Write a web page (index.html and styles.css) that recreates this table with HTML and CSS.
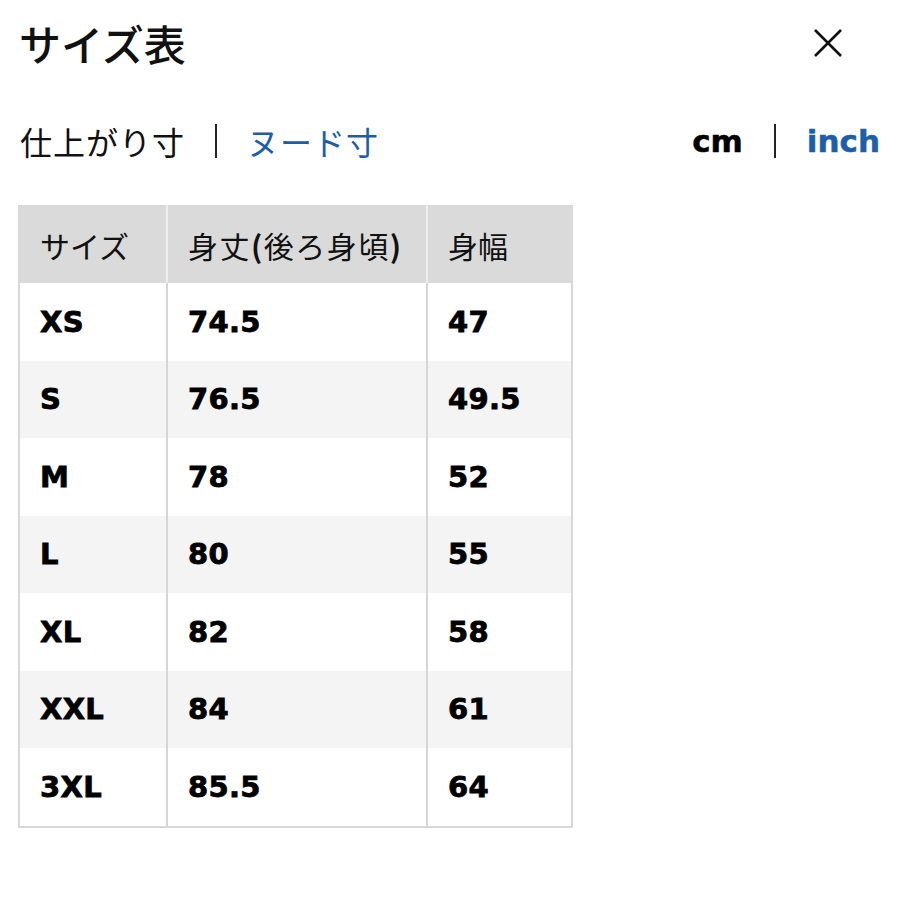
FILE: index.html
```html
<!DOCTYPE html>
<html lang="ja">
<head>
<meta charset="utf-8">
<link rel="stylesheet" href="styles.css">
</head>
<body>
<div class="page">
  <header class="top">
    <h1 class="title">サイズ表</h1>
    <svg class="close" width="30" height="30" viewBox="0 0 30 30"><path d="M2 2 L28 28 M28 2 L2 28" stroke="#111" stroke-width="2.6" fill="none"/></svg>
  </header>
  <div class="tabs">
    <div class="group">
      <span class="tab jp">仕上がり寸</span>
      <span class="bar"></span>
      <span class="tab jp link">ヌード寸</span>
    </div>
    <div class="group">
      <span class="tab unit">cm</span>
      <span class="bar"></span>
      <span class="tab unit link">inch</span>
    </div>
  </div>
  <table class="sizes">
    <thead>
      <tr><th class="c1">サイズ</th><th class="c2">身丈<b>(</b>後ろ身頃<b>)</b></th><th class="c3">身幅</th></tr>
    </thead>
    <tbody>
      <tr><td>XS</td><td>74.5</td><td>47</td></tr>
      <tr><td>S</td><td>76.5</td><td>49.5</td></tr>
      <tr><td>M</td><td>78</td><td>52</td></tr>
      <tr><td>L</td><td>80</td><td>55</td></tr>
      <tr><td>XL</td><td>82</td><td>58</td></tr>
      <tr><td>XXL</td><td>84</td><td>61</td></tr>
      <tr><td>3XL</td><td>85.5</td><td>64</td></tr>
    </tbody>
  </table>
</div>
</body>
</html>
```
FILE: styles.css
```css
html, body { margin: 0; padding: 0; background: #fff; }
body { font-family: "Noto Sans CJK JP", "Noto Sans", sans-serif; color: #111; }
.page { padding: 0 20px 0 18px; }
.top { display: flex; justify-content: space-between; align-items: center; padding-top: 19px; padding-left: 1px; }
.title { margin: 0; font-size: 42px; font-weight: 500; line-height: 48px; letter-spacing: 0; }
.close { margin-right: 37px; }
.tabs { display: flex; justify-content: space-between; align-items: center; margin-top: 54px; height: 40px; margin-bottom: 44px; padding-left: 2px; }
.group { display: flex; align-items: center; }
.tab { line-height: 40px; }
.jp { font-size: 32px; letter-spacing: 1px; }
.unit { font-family: "DejaVu Sans", sans-serif; font-weight: 700; font-size: 31px; color: #000; -webkit-text-stroke: 0.5px #000; }
.unit.link { color: #1c5ea8; -webkit-text-stroke: 0.5px #1c5ea8; }
.link { color: #1c5ea8; }
.bar { display: inline-block; width: 2px; height: 34px; background: #222; margin: 0 31px; }
.jp + .bar { margin: 0 30px 0 30px; }
.sizes { border-collapse: collapse; width: 555px; border: 2px solid #d8d8d8; table-layout: fixed; }
.sizes th { background: #dadada; height: 76px; text-align: left; font-weight: 400; font-size: 30px; padding: 0 0 0 20px; border-left: 2px solid #eeeeee; }
.sizes th b { font-weight: 700; }
.sizes th.c1 { width: 126px; border-left: none; }
.sizes th.c2 { width: 238px; letter-spacing: 1.5px; }
.sizes td { height: 77.5px; padding: 0 0 0 20px; font-family: "DejaVu Sans", sans-serif; font-weight: 700; font-size: 29px; color: #000; -webkit-text-stroke: 0.8px #000; letter-spacing: 0.3px; border-left: 2px solid #d6d6d6; }
.sizes td:first-child { border-left: none; }
.sizes tbody tr:nth-child(even) td { background: #f4f4f4; }
```
